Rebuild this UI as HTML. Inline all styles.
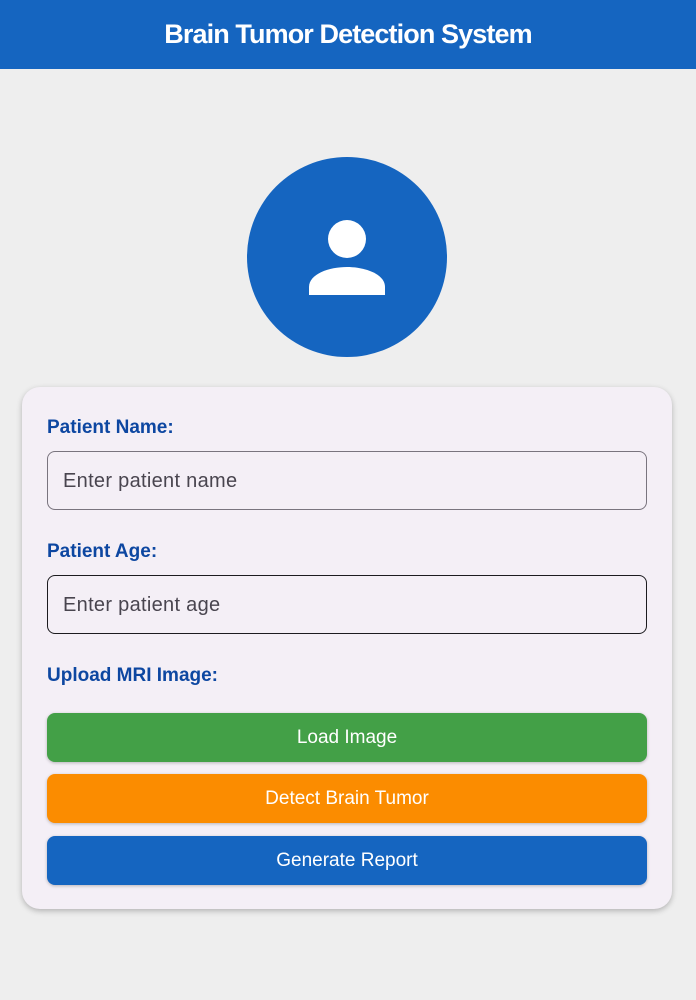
<!DOCTYPE html>
<html><head><meta charset="utf-8"><style>
*{margin:0;padding:0;box-sizing:border-box}
body{width:696px;height:1000px;background:#eeeeee;font-family:"Liberation Sans",sans-serif;position:relative;overflow:hidden}
.top{position:absolute;left:0;top:0;width:696px;height:69px;background:#1565c0;color:#fff;font-size:27px;font-weight:bold;text-align:center;line-height:68px;letter-spacing:-0.9px}
.av{position:absolute;left:247px;top:157px;width:200px;height:200px;border-radius:50%;background:#1565c0}
.card{position:absolute;left:22px;top:387px;width:650px;height:522px;background:#f4eff6;border-radius:18px;box-shadow:0 2px 6px rgba(0,0,0,.25)}
.lbl{position:absolute;left:47px;color:#0d47a1;font-size:19px;font-weight:bold}
.inp{position:absolute;left:47px;width:600px;height:59px;border:1px solid #79747e;border-radius:8px;padding-left:15px;line-height:59px;font-size:20px;color:#49454f;letter-spacing:0.3px}
.btn{position:absolute;left:47px;width:600px;height:49px;border-radius:8px;color:#fff;font-size:19px;text-align:center;line-height:50px;box-shadow:0 1px 3px rgba(0,0,0,.25)}
</style></head><body>
<div class="top">Brain Tumor Detection System</div>
<div class="av"><svg width="200" height="200" viewBox="0 0 200 200"><circle cx="100" cy="82" r="19" fill="#fff"/><path d="M62 138 V130 C62 117 82 110 100 110 C118 110 138 117 138 130 V138 Z" fill="#fff"/></svg></div>
<div class="card"></div>
<div class="lbl" style="top:417px">Patient Name:</div>
<div class="inp" style="top:451px">Enter patient name</div>
<div class="lbl" style="top:541px">Patient Age:</div>
<div class="inp" style="top:575px;border-color:#1c1b1f">Enter patient age</div>
<div class="lbl" style="top:665px">Upload MRI Image:</div>
<div class="btn" style="top:713px;background:#43a047">Load Image</div>
<div class="btn" style="top:774px;background:#fb8c00">Detect Brain Tumor</div>
<div class="btn" style="top:836px;background:#1565c0">Generate Report</div>
</body></html>
